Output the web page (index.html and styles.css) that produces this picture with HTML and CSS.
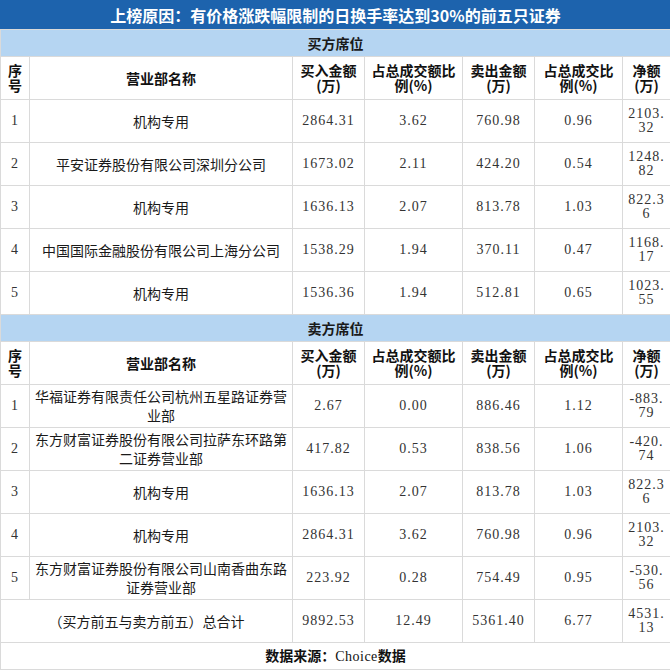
FILE: index.html
```html
<!DOCTYPE html>
<html lang="zh">
<head>
<meta charset="utf-8">
<title>龙虎榜</title>
<link rel="stylesheet" href="styles.css">
</head>
<body>
<table class="lhb">
  <colgroup>
    <col class="c-no"><col class="c-name"><col class="c-buy"><col class="c-bpct"><col class="c-sell"><col class="c-spct"><col class="c-net">
  </colgroup>
  <tbody>
    <tr class="r-title"><td colspan="7" class="title">上榜原因：有价格涨跌幅限制的日换手率达到30%的前五只证券</td></tr>
    <tr class="r-sub"><td colspan="7" class="sub">买方席位</td></tr>
    <tr class="r-head">
      <th>序号</th><th>营业部名称</th><th>买入金额(万)</th><th>占总成交额比例(%)</th><th>卖出金额(万)</th><th>占总成交比例(%)</th><th>净额(万)</th>
    </tr>
    <tr class="r-data"><td class="num">1</td><td class="name">机构专用</td><td class="num">2864.31</td><td class="num">3.62</td><td class="num">760.98</td><td class="num">0.96</td><td class="num net">2103.32</td></tr>
    <tr class="r-data"><td class="num">2</td><td class="name">平安证券股份有限公司深圳分公司</td><td class="num">1673.02</td><td class="num">2.11</td><td class="num">424.20</td><td class="num">0.54</td><td class="num net">1248.82</td></tr>
    <tr class="r-data"><td class="num">3</td><td class="name">机构专用</td><td class="num">1636.13</td><td class="num">2.07</td><td class="num">813.78</td><td class="num">1.03</td><td class="num net">822.36</td></tr>
    <tr class="r-data"><td class="num">4</td><td class="name">中国国际金融股份有限公司上海分公司</td><td class="num">1538.29</td><td class="num">1.94</td><td class="num">370.11</td><td class="num">0.47</td><td class="num net">1168.17</td></tr>
    <tr class="r-data"><td class="num">5</td><td class="name">机构专用</td><td class="num">1536.36</td><td class="num">1.94</td><td class="num">512.81</td><td class="num">0.65</td><td class="num net">1023.55</td></tr>
    <tr class="r-sub"><td colspan="7" class="sub">卖方席位</td></tr>
    <tr class="r-head">
      <th>序号</th><th>营业部名称</th><th>买入金额(万)</th><th>占总成交额比例(%)</th><th>卖出金额(万)</th><th>占总成交比例(%)</th><th>净额(万)</th>
    </tr>
    <tr class="r-data"><td class="num">1</td><td class="name">华福证券有限责任公司杭州五星路证券营业部</td><td class="num">2.67</td><td class="num">0.00</td><td class="num">886.46</td><td class="num">1.12</td><td class="num net">-883.79</td></tr>
    <tr class="r-data"><td class="num">2</td><td class="name">东方财富证券股份有限公司拉萨东环路第二证券营业部</td><td class="num">417.82</td><td class="num">0.53</td><td class="num">838.56</td><td class="num">1.06</td><td class="num net">-420.74</td></tr>
    <tr class="r-data"><td class="num">3</td><td class="name">机构专用</td><td class="num">1636.13</td><td class="num">2.07</td><td class="num">813.78</td><td class="num">1.03</td><td class="num net">822.36</td></tr>
    <tr class="r-data"><td class="num">4</td><td class="name">机构专用</td><td class="num">2864.31</td><td class="num">3.62</td><td class="num">760.98</td><td class="num">0.96</td><td class="num net">2103.32</td></tr>
    <tr class="r-data"><td class="num">5</td><td class="name">东方财富证券股份有限公司山南香曲东路证券营业部</td><td class="num">223.92</td><td class="num">0.28</td><td class="num">754.49</td><td class="num">0.95</td><td class="num net">-530.56</td></tr>
    <tr class="r-data"><td colspan="2" class="name">（买方前五与卖方前五）总合计</td><td class="num">9892.53</td><td class="num">12.49</td><td class="num">5361.40</td><td class="num">6.77</td><td class="num net">4531.13</td></tr>
    <tr class="r-foot"><td colspan="7" class="foot">数据来源：<span class="latin">Choice</span>数据</td></tr>
  </tbody>
</table>
</body>
</html>
```

FILE: styles.css
```css
html, body {
  margin: 0;
  padding: 0;
  background: #ffffff;
}

.lhb {
  width: 670px;
  border-collapse: collapse;
  table-layout: fixed;
  font-family: "Noto Sans CJK SC", "Noto Sans", sans-serif;
  font-size: 14px;
  color: #1a1a1a;
}

.c-no { width: 29px; }
.c-name { width: 263px; }
.c-buy { width: 72px; }
.c-bpct { width: 98px; }
.c-sell { width: 72px; }
.c-spct { width: 88px; }
.c-net { width: 48px; }

.lhb td,
.lhb th {
  border: 1px solid #dadada;
  padding: 0 3px;
  text-align: center;
  vertical-align: middle;
  overflow: hidden;
}

.r-title td { height: 28px; }
.r-sub td { height: 26px; }
.r-head th { height: 42px; }
.r-data td { height: 42px; }
.r-foot td { height: 26px; }

.title {
  background: #1d63ad;
  border-color: #1d63ad #dadada #dadada #1d63ad !important;
  color: #ffffff;
  font-weight: 700;
  font-size: 16px;
  line-height: 20px;
}

.sub {
  background: #b5d5f2;
  font-weight: 700;
  line-height: 18px;
}

.lhb th {
  font-weight: 700;
  line-height: 15px;
  color: #111111;
}

.name {
  line-height: 19px;
  padding: 0 4px !important;
  color: #1a1a1a;
}

.num {
  font-family: "Liberation Serif", "DejaVu Serif", serif;
  letter-spacing: 1px;
  font-size: 14px;
  line-height: 14px;
  color: #333333;
}

.net {
  word-break: break-all;
}

.foot {
  font-weight: 700;
  line-height: 18px;
  color: #111111;
}

.latin {
  font-family: "Liberation Serif", serif;
  font-weight: 400;
  letter-spacing: 0.5px;
}
```
